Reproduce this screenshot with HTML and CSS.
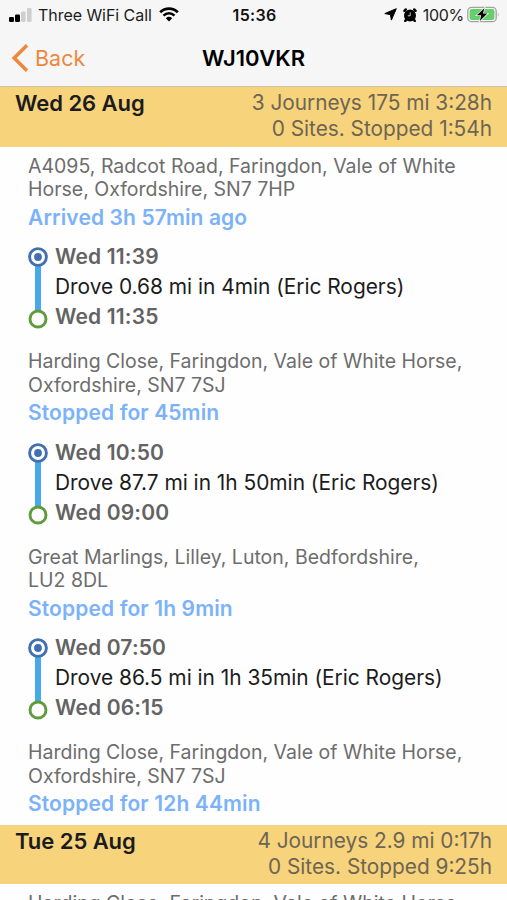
FILE: index.html
```
<!DOCTYPE html>
<html lang="en">
<head>
<meta charset="utf-8">
<meta name="viewport" content="width=device-width, initial-scale=1">
<title>WJ10VKR</title>
<link rel="stylesheet" href="styles.css">
</head>

<body>
<header class="top">
  <div class="status-bar">
    <div class="carrier">
      <svg class="signal" width="23" height="14" viewBox="0 0 23 14">
        <rect x="0" y="9" width="5" height="5" rx="1.2"/>
        <rect x="6" y="6.5" width="5" height="7.5" rx="1.2"/>
        <rect class="off" x="12" y="3.5" width="4.6" height="10.5" rx="1.2"/>
        <rect class="off" x="18" y="0" width="4.6" height="14" rx="1.2"/>
      </svg>
      <span class="carrier-name">Three WiFi Call</span>
      <svg class="wifi" width="20" height="15" viewBox="0 0 20 15">
        <path d="M1.2 5.2C6.2 .3 13.8 .3 18.8 5.2" fill="none" stroke="#000" stroke-width="2.7"/>
        <path d="M4.5 8.6C7.7 5.5 12.3 5.5 15.5 8.6" fill="none" stroke="#000" stroke-width="2.5"/>
        <path d="M10 14.5L6.8 11.2Q10 8.4 13.2 11.2Z"/>
      </svg>
    </div>
    <span class="clock">15:36</span>
    <div class="battery-group">
      <svg class="location" width="13" height="13" viewBox="0 0 13 13">
        <path d="M12.3 .7L7.4 12.1L6.4 6.6L.8 5.6Z" stroke="#000" stroke-linejoin="round"/>
      </svg>
      <svg class="alarm" width="14" height="14" viewBox="0 0 14 14">
        <circle cx="7" cy="7.4" r="6"/>
        <path d="M2.8 1.4L1.4 2.8M11.2 1.4L12.6 2.8M3.2 11.5L2.2 13M10.8 11.5L11.8 13" stroke="#000" stroke-width="2.4" stroke-linecap="round"/>
        <path d="M7.2 4.4V7.8H4.8" fill="none" stroke="#e8e8e8" stroke-width=".9"/>
      </svg>
      <span class="percent">100%</span>
      <svg class="battery" width="33" height="17" viewBox="0 0 33 17">
        <rect x=".8" y="1.3" width="28.4" height="14.4" rx="3.8" fill="none" stroke="#a3a3a3" stroke-width="1.3"/>
        <rect x="2.6" y="3.1" width="24.8" height="10.8" rx="2.2" fill="#65cf6c"/>
        <path d="M30.8 6.2Q32.4 8.5 30.8 10.8Z" fill="#a3a3a3"/>
        <path d="M17.4 2.2L9.8 9.3H14.2L12.8 15L20.4 7.6H15.9Z" stroke="#f6f6f6" stroke-width="1.4" paint-order="stroke"/>
      </svg>
    </div>
  </div>
  <nav class="nav-bar">
    <a class="back" href="#">
      <svg width="18" height="30" viewBox="0 0 18 30">
        <path d="M16 2.2L3.2 15L16 27.8" fill="none" stroke="#ec893d" stroke-width="3.6"/>
      </svg>
      <span>Back</span>
    </a>
    <h1 class="title">WJ10VKR</h1>
  </nav>
</header>

<main>
  <section class="day">
    <div class="day-header">
      <h2>Wed 26 Aug</h2>
      <div class="totals">
        <p>3 Journeys 175 mi 3:28h</p>
        <p>0 Sites. Stopped 1:54h</p>
      </div>
    </div>
    <div class="entries">
      <div class="place">
        <p class="address">A4095, Radcot Road, Faringdon, Vale of White<br>Horse, Oxfordshire, SN7 7HP</p>
        <p class="state">Arrived 3h 57min ago</p>
      </div>
      <div class="journey">
        <svg class="track" width="20" height="84" viewBox="0 0 20 84">
          <path d="M10 18V66" stroke="#48a9ea" stroke-width="6"/>
          <circle cx="10" cy="11" r="8.4" fill="#fff" stroke="#416fb0" stroke-width="2.9"/>
          <circle cx="10" cy="11" r="3.9" fill="#416fb0"/>
          <circle cx="10" cy="73" r="8" fill="#fff" stroke="#5f9a3c" stroke-width="2.9"/>
        </svg>
        <div class="legs">
          <p class="time">Wed 11:39</p>
          <p class="drove">Drove 0.68 mi in 4min (Eric Rogers)</p>
          <p class="time">Wed 11:35</p>
        </div>
      </div>
      <div class="place">
        <p class="address">Harding Close, Faringdon, Vale of White Horse,<br>Oxfordshire, SN7 7SJ</p>
        <p class="state">Stopped for 45min</p>
      </div>
      <div class="journey">
        <svg class="track" width="20" height="84" viewBox="0 0 20 84">
          <path d="M10 18V66" stroke="#48a9ea" stroke-width="6"/>
          <circle cx="10" cy="11" r="8.4" fill="#fff" stroke="#416fb0" stroke-width="2.9"/>
          <circle cx="10" cy="11" r="3.9" fill="#416fb0"/>
          <circle cx="10" cy="73" r="8" fill="#fff" stroke="#5f9a3c" stroke-width="2.9"/>
        </svg>
        <div class="legs">
          <p class="time">Wed 10:50</p>
          <p class="drove">Drove 87.7 mi in 1h 50min (Eric Rogers)</p>
          <p class="time">Wed 09:00</p>
        </div>
      </div>
      <div class="place">
        <p class="address">Great Marlings, Lilley, Luton, Bedfordshire,<br>LU2 8DL</p>
        <p class="state">Stopped for 1h 9min</p>
      </div>
      <div class="journey">
        <svg class="track" width="20" height="84" viewBox="0 0 20 84">
          <path d="M10 18V66" stroke="#48a9ea" stroke-width="6"/>
          <circle cx="10" cy="11" r="8.4" fill="#fff" stroke="#416fb0" stroke-width="2.9"/>
          <circle cx="10" cy="11" r="3.9" fill="#416fb0"/>
          <circle cx="10" cy="73" r="8" fill="#fff" stroke="#5f9a3c" stroke-width="2.9"/>
        </svg>
        <div class="legs">
          <p class="time">Wed 07:50</p>
          <p class="drove">Drove 86.5 mi in 1h 35min (Eric Rogers)</p>
          <p class="time">Wed 06:15</p>
        </div>
      </div>
      <div class="place">
        <p class="address">Harding Close, Faringdon, Vale of White Horse,<br>Oxfordshire, SN7 7SJ</p>
        <p class="state">Stopped for 12h 44min</p>
      </div>
    </div>
  </section>

  <section class="day">
    <div class="day-header">
      <h2>Tue 25 Aug</h2>
      <div class="totals">
        <p>4 Journeys 2.9 mi 0:17h</p>
        <p>0 Sites. Stopped 9:25h</p>
      </div>
    </div>
    <div class="entries">
      <div class="place">
        <p class="address">Harding Close, Faringdon, Vale of White Horse,</p>
      </div>
    </div>
  </section>
</main>
</body>
</html>
```
FILE: styles.css
```
* {
  box-sizing: border-box;
}

body {
  margin: 0;
  height: 900px;
  overflow: hidden;
  display: flex;
  flex-direction: column;
  background: #fefefe;
  font-family: Inter, "Liberation Sans", sans-serif;
  color: #1c1c1c;
  white-space: nowrap;
}

h1, h2, p {
  margin: 0;
}

svg {
  display: block;
  flex: none;
}

/* status + navigation */

.top {
  flex: none;
  height: 87px;
  background: #f6f6f6;
  border-bottom: 1px solid #cfc3a6;
}

.status-bar {
  display: grid;
  grid-template-columns: 1fr auto 1fr;
  align-items: center;
  height: 29px;
  padding: 0 7px 0 9px;
  font-size: 16px;
}

.carrier,
.battery-group {
  display: flex;
  align-items: center;
}

.carrier-name {
  margin: 0 7px 0 6px;
  letter-spacing: -0.05px;
}

.signal .off {
  fill: #cfcfcf;
}

.clock {
  font-weight: 600;
  color: #111;
  letter-spacing: 0.3px;
}

.battery-group {
  justify-content: flex-end;
}

.alarm {
  margin: 0 6px 0 6px;
}

.percent {
  letter-spacing: -0.3px;
}

.battery {
  margin-left: 3px;
}

.nav-bar {
  display: grid;
  grid-template-columns: 1fr auto 1fr;
  align-items: center;
  height: 57px;
  padding: 0 11px;
}

.back {
  display: flex;
  align-items: center;
  gap: 6px;
  color: #ec893d;
  font-size: 21.5px;
  text-decoration: none;
}

.title {
  font-size: 22px;
  font-weight: 600;
  color: #000;
}

/* day list */

main {
  flex: none;
}

.day-header {
  display: flex;
  justify-content: space-between;
  height: 59.5px;
  padding: 3px 15px 0;
  background: #f7d37c;
}

.day-header h2 {
  font-size: 22px;
  font-weight: 600;
  line-height: 27px;
  letter-spacing: -0.05px;
}

.totals {
  font-size: 20.8px;
  line-height: 26px;
  text-align: right;
  color: #6d6553;
}

.entries {
  padding: 8px 28px 7.5px;
}

.address {
  font-size: 19.5px;
  line-height: 23.5px;
  color: #6d6d6d;
}

.state {
  margin-top: 3px;
  font-size: 21px;
  font-weight: 600;
  line-height: 26px;
  letter-spacing: 0.12px;
  color: #7bb2fa;
}

.journey {
  display: flex;
  gap: 7px;
  margin: 11.5px 0 18px;
}

.track {
  margin-top: 4px;
}

.legs {
  font-size: 21px;
  line-height: 30px;
}

.time {
  font-weight: 600;
  letter-spacing: 0.15px;
  color: #636363;
}

.drove {
  font-size: 20.9px;
  letter-spacing: -0.02px;
}
```
